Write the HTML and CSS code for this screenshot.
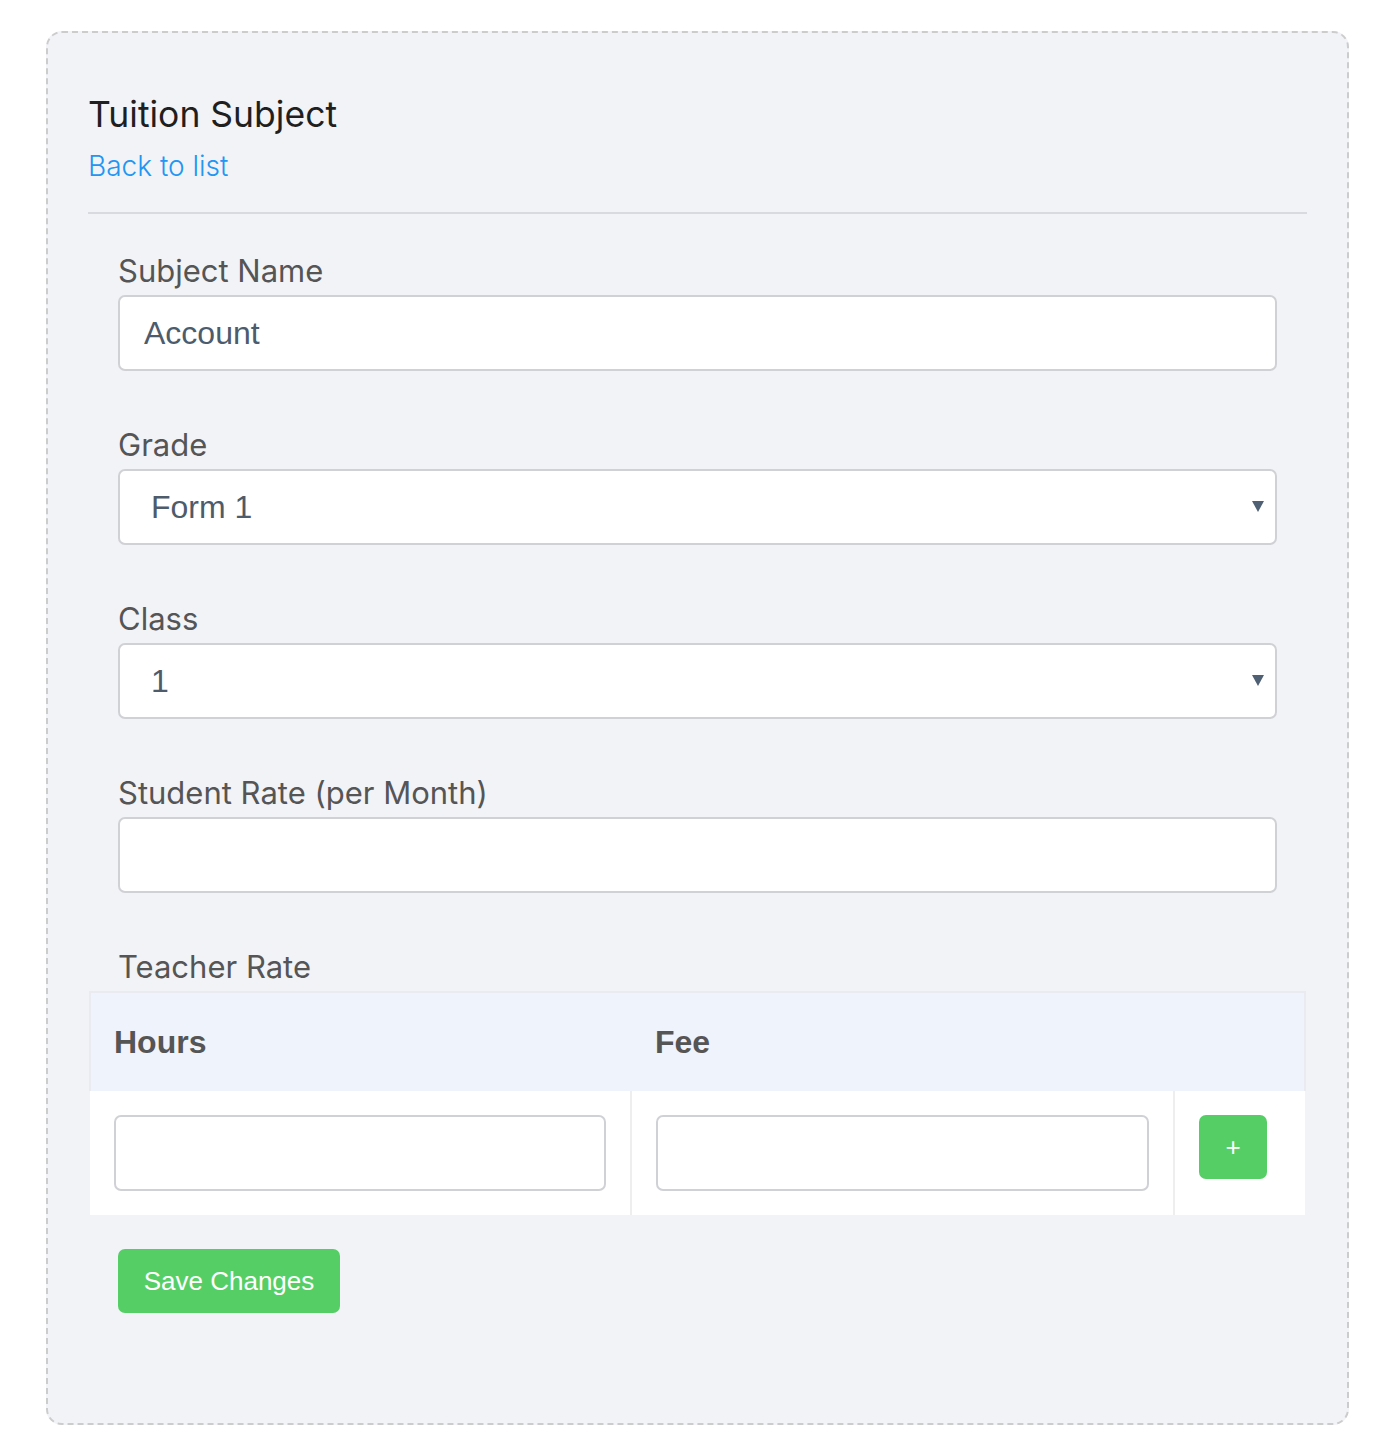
FILE: index.html
```html
<!DOCTYPE html>
<html lang="en">
<head>
<meta charset="utf-8">
<title>Tuition Subject</title>
<link rel="stylesheet" href="styles.css">
</head>
<body>
<div class="page">
  <div class="card">
    <div class="card-head">
      <h1 class="title">Tuition Subject</h1>
      <a class="back" href="#">Back to list</a>
    </div>
    <hr class="divider">
    <form class="form">
      <div class="group">
        <label class="label">Subject Name</label>
        <input class="control" type="text" value="Account">
      </div>
      <div class="group">
        <label class="label">Grade</label>
        <div class="select-wrap">
          <select class="control select"><option>Form 1</option></select>
        </div>
      </div>
      <div class="group">
        <label class="label">Class</label>
        <div class="select-wrap">
          <select class="control select"><option>1</option></select>
        </div>
      </div>
      <div class="group">
        <label class="label">Student Rate (per Month)</label>
        <input class="control" type="text" value="">
      </div>
      <div class="group group-last">
        <label class="label">Teacher Rate</label>
      </div>
      <table class="rates">
        <thead>
          <tr>
            <th class="col-hours">Hours</th>
            <th class="col-fee">Fee</th>
            <th class="col-act"></th>
          </tr>
        </thead>
        <tbody>
          <tr>
            <td><input class="control cell-input" type="text"></td>
            <td><input class="control cell-input" type="text"></td>
            <td><button type="button" class="btn btn-add">+</button></td>
          </tr>
        </tbody>
      </table>
      <div class="actions">
        <button type="button" class="btn btn-save">Save Changes</button>
      </div>
    </form>
  </div>
</div>
</body>
</html>
```

FILE: styles.css
```css
* { box-sizing: border-box; }
html, body { margin: 0; padding: 0; background: #ffffff; }
body { font-family: "Inter", "Roboto", sans-serif; }

.page {
  padding: 31px 28px 24px 46px;
}

.card {
  border: 2px dashed #cccccc;
  border-radius: 16px;
  background: #f2f3f7;
  padding: 60px 40px 110px;
}

.title {
  margin: 0;
  font-size: 35.5px;
  line-height: 44px;
  font-weight: 400;
  color: #1f1f1f;
}

.back {
  display: block;
  margin-top: 9px;
  font-size: 28px;
  line-height: 40px;
  color: #2196f3;
  text-decoration: none;
  font-weight: 300;
}

.divider {
  margin: 26px 0 0;
  border: 0;
  height: 2px;
  background: #d9dadf;
}

.form { padding-top: 36px; }

.group {
  padding: 0 30px;
  margin-bottom: 53px;
}
.group-last { margin-bottom: 0; }

.label {
  display: block;
  font-size: 31px;
  line-height: 42px;
  color: #555555;
  margin-bottom: 3px;
}

.control {
  display: block;
  width: 100%;
  height: 76px;
  border: 2px solid #d0d1d5;
  border-radius: 7px;
  background: #ffffff;
  font-family: "Liberation Sans", Arial, sans-serif;
  font-size: 32px;
  color: #4e5b6b;
  padding: 0 24px;
  outline: none;
}

.select-wrap { position: relative; }
.select {
  appearance: none;
  -webkit-appearance: none;
  padding-left: 31px;
}
.select-wrap::after {
  content: "";
  position: absolute;
  right: 13px;
  top: 32px;
  width: 0;
  height: 0;
  border-left: 6px solid transparent;
  border-right: 6px solid transparent;
  border-top: 11px solid #4f6074;
  pointer-events: none;
}

.rates {
  width: calc(100% - 2px);
  margin-left: 1px;
  border-collapse: collapse;
  table-layout: fixed;
}
.rates th {
  background: #eff3fb;
  height: 99px;
  text-align: left;
  padding: 0 24px;
  font-family: "Liberation Sans", Arial, sans-serif;
  font-weight: 700;
  font-size: 32px;
  color: #555555;
  border-top: 2px solid #e9ebf0;
}
.rates th:first-child { border-left: 2px solid #e9ebf0; padding-left: 23px; }
.rates th:last-child { border-right: 2px solid #e9ebf0; }
.col-hours { width: 541px; }
.col-fee { width: 543px; }
.rates td {
  background: #ffffff;
  padding: 24px 24px 24px 24px;
  vertical-align: top;
  border-left: 2px solid #eeeeee;
}
.rates td:first-child { border-left: 0; }
.cell-input { width: 100%; }

.btn {
  border: 0;
  background: #55cf65;
  color: #ffffff;
  border-radius: 7px;
  font-family: "Liberation Sans", Arial, sans-serif;
  cursor: pointer;
}
.btn-add {
  width: 68px;
  height: 64px;
  font-size: 26px;
  padding: 0;
}

.actions {
  padding: 34px 30px 0;
}
.btn-save {
  width: 222px;
  height: 64px;
  font-size: 26px;
  padding: 0;
}
```
